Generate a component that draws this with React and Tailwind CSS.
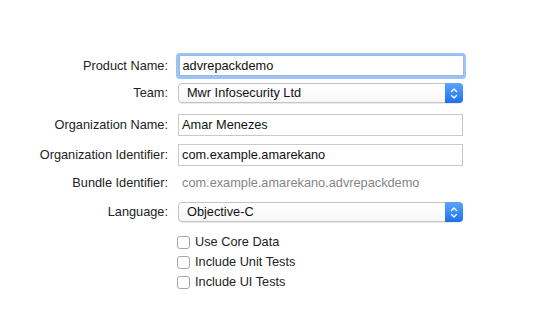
import React from 'react'

const font = { fontFamily: '"Liberation Sans", Arial, sans-serif' }

function Label({ children }) {
  return <div className="w-[170px] shrink-0 pr-[2px] text-right text-[12.75px] text-[#222]">{children}</div>
}

function TextField({ value, focused }) {
  if (focused) {
    return (
      <div className="ml-[6px] w-[290px] rounded-[4px] bg-[#9cc3f5] p-[2.5px]">
        <div className="flex h-[21px] items-center border border-[#9ab9e6] bg-white pl-[3px] text-[12.75px] text-[#111]">{value}</div>
      </div>
    )
  }
  return (
    <div className="ml-[8px] flex h-[22px] w-[285px] items-center border border-[#c9c9c9] bg-white pl-[3px] text-[12.75px] text-[#111]">
      {value}
    </div>
  )
}

function Popup({ value }) {
  return (
    <div className="ml-[8px] flex h-[20px] w-[285px] items-stretch rounded-[4px] border border-[#c4c4c4] bg-gradient-to-b from-white to-[#f7f7f7] shadow-[0_1px_0_rgba(0,0,0,0.08)]">
      <div className="flex flex-1 items-center pl-[8px] text-[12.75px] text-[#111]">{value}</div>
      <div className="-my-px -mr-px flex w-[18px] items-center justify-center rounded-r-[4px] bg-gradient-to-b from-[#5aa6fb] to-[#1b6ff0]">
        <svg width="8" height="13" viewBox="0 0 8 13" fill="none" stroke="white" strokeWidth="1.4" strokeLinecap="round" strokeLinejoin="round">
          <path d="M1.5 4.5 L4 2 L6.5 4.5" />
          <path d="M1.5 8.5 L4 11 L6.5 8.5" />
        </svg>
      </div>
    </div>
  )
}

function Check({ label }) {
  return (
    <div className="flex h-[20px] items-center">
      <div className="ml-[177px] h-[13px] w-[13px] rounded-[3px] border border-[#a9a9a9] bg-white" />
      <span className="ml-[5px] text-[12.75px] text-[#222]">{label}</span>
    </div>
  )
}

export default function App() {
  return (
    <div className="h-[326px] w-[544px] bg-white pt-[53px]" style={font}>
      <div className="flex h-[25px] items-center">
        <Label>Product Name:</Label>
        <TextField value="advrepackdemo" focused />
      </div>
      <div className="mt-[5px] flex h-[20px] items-center">
        <Label>Team:</Label>
        <Popup value="Mwr Infosecurity Ltd" />
      </div>
      <div className="mt-[11px] flex h-[22px] items-center">
        <Label>Organization Name:</Label>
        <TextField value="Amar Menezes" />
      </div>
      <div className="mt-[8px] flex h-[22px] items-center">
        <Label>Organization Identifier:</Label>
        <TextField value="com.example.amarekano" />
      </div>
      <div className="mt-[6px] flex h-[22px] items-center">
        <Label>Bundle Identifier:</Label>
        <div className="ml-[12px] text-[12.75px] text-[#858585]">com.example.amarekano.advrepackdemo</div>
      </div>
      <div className="mt-[8px] flex h-[20px] items-center">
        <Label>Language:</Label>
        <Popup value="Objective-C" />
      </div>
      <div className="mt-[10px]">
        <Check label="Use Core Data" />
        <Check label="Include Unit Tests" />
        <Check label="Include UI Tests" />
      </div>
    </div>
  )
}
